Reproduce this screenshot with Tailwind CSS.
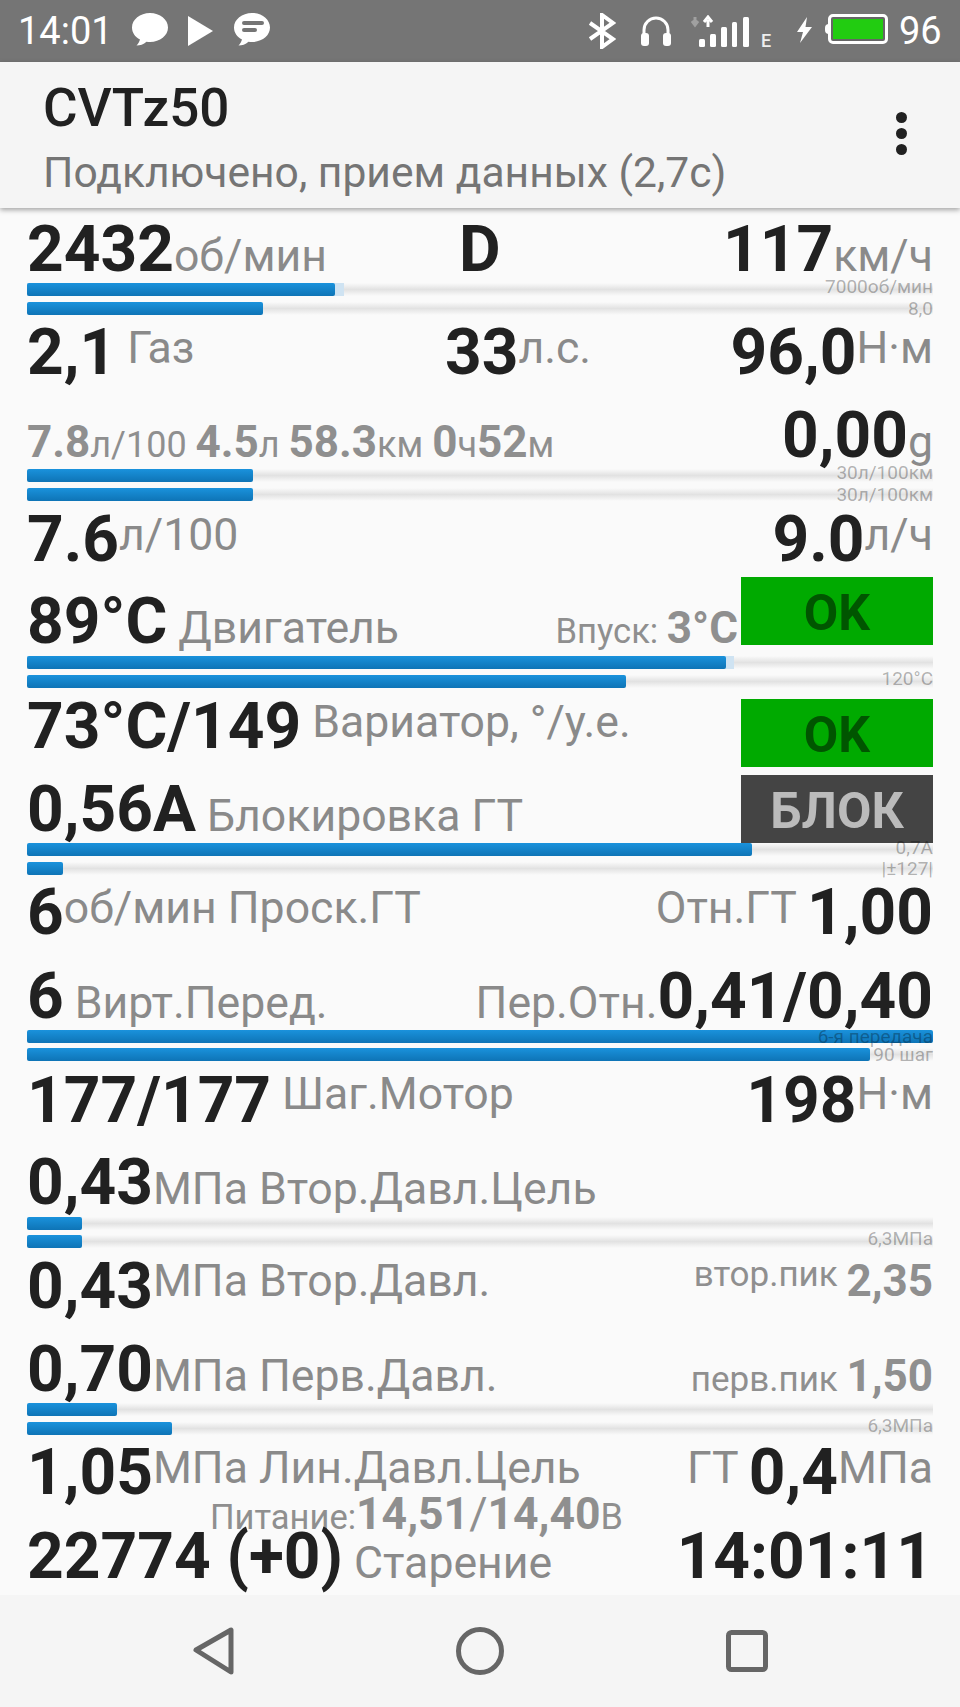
<!DOCTYPE html>
<html lang="ru"><head><meta charset="utf-8">
<script src="https://cdn.jsdelivr.net/npm/@tailwindcss/browser@4"></script>
</head>
<body class="m-0 font-[Roboto,sans-serif]">
<div class="w-[960px] h-[1707px] flex flex-col bg-[#fafafa] overflow-hidden">
  <!-- status bar -->
  <div class="h-[62px] bg-[#757575] flex items-center text-white text-[38px] leading-none relative shrink-0">
    <span class="ml-[18px] w-[114px]">14:01</span>
    <svg class="w-[36px] h-[33px] mt-[-3px]" viewBox="0 0 36 33" fill="#fff"><path d="M18 0C8 0 0 6.500 0 14.500c0 5 3 9.500 8 12-.5 2-2 4.500-3.500 6 3.500 0 7-1 10-3.800 1.100.2 2.300.3 3.500.3 10 0 18-6.500 18-14.500S28 0 18 0z"/></svg>
    <svg class="w-[25px] h-[30px] ml-[20px]" viewBox="0 0 25 30" fill="#fff"><path d="M0 0l25 15L0 30z"/></svg>
    <svg class="w-[36px] h-[33px] ml-[21px] mt-[-3px]" viewBox="0 0 36 33"><path fill="#fff" d="M18 0C8 0 0 6.500 0 14.500c0 5 3 9.500 8 12-.5 2-2 4.500-3.500 6 3.500 0 7-1 10-3.800 1.100.2 2.300.3 3.500.3 10 0 18-6.500 18-14.500S28 0 18 0z"/><path d="M10 10h18M10 17h11" stroke="#757575" stroke-width="4" stroke-linecap="round"/></svg>
    <svg class="w-[28px] h-[36px] ml-[318px]" viewBox="0 0 28 36" fill="none" stroke="#fff" stroke-width="4"><path d="M2 10l23 16-11 8V2l11 8L2 26"/></svg>
    <svg class="w-[32px] h-[30px] ml-[24px]" viewBox="0 0 32 30"><path d="M4 19v-5a12 12 0 0 1 24 0v5" fill="none" stroke="#fff" stroke-width="3"/><rect x="1" y="17" width="8" height="13" rx="3" fill="#fff"/><rect x="23" y="17" width="8" height="13" rx="3" fill="#fff"/></svg>
    <svg class="w-[60px] h-[32px] ml-[19px]" viewBox="0 0 60 32">
      <path d="M4 2v6M1 6l3 4 3-4" stroke="#a0a0a0" stroke-width="3" fill="none"/>
      <path d="M17 12V5M13 7l4-5 4 5" stroke="#fff" stroke-width="3" fill="none"/>
      <rect x="8" y="24" width="6" height="8" rx="1.500" fill="#fff"/><rect x="19" y="19" width="6" height="13" rx="1.500" fill="#fff"/><rect x="30" y="12" width="6" height="20" rx="1.500" fill="#fff"/><rect x="41" y="7" width="5" height="25" rx="1.500" fill="#fff"/><rect x="52" y="2" width="6" height="30" rx="1.500" fill="#fff"/>
    </svg>
    <span class="text-[18px] font-medium text-[#eee] ml-[10px] mt-[20px] w-[35px]">E</span>
    <svg class="w-[17px] h-[26px] ml-[0px] mt-[-3px]" viewBox="0 0 17 26" fill="#fff"><path d="M11 0L1 15h6L4 26l12-16H9.500z"/></svg>
    <div class="w-[63px] h-[30px] ml-[12px] flex items-center mt-[-4px]">
      <div class="w-[4px] h-[10px] bg-white rounded-l-sm"></div>
      <div class="w-[60px] h-[30px] border-[3px] border-white rounded-[5px] bg-[#666] p-[2px] ml-[-1px]"><div class="w-full h-full bg-[#22cc11]"></div></div>
    </div>
    <span class="ml-[11px]">96</span>
  </div>
  <!-- header -->
  <div class="h-[146px] bg-[#f5f5f5] shadow-[0_2px_5px_rgba(0,0,0,0.35)] relative z-10 shrink-0 flex justify-between pl-[43px] pr-[53px]">
    <div class="whitespace-nowrap">
      <div class="text-[53px] font-medium text-[#212121] leading-[58px] mt-[17px]">CVTz50</div>
      <div class="text-[42.600px] text-[#757575] leading-[44px] mt-[13px]">Подключено, прием данных (2,7с)</div>
    </div>
    <div class="flex flex-col gap-[5px] mt-[50px]">
      <div class="w-[11px] h-[11px] rounded-full bg-[#212121]"></div><div class="w-[11px] h-[11px] rounded-full bg-[#212121]"></div><div class="w-[11px] h-[11px] rounded-full bg-[#212121]"></div>
    </div>
  </div>
  <!-- data -->
  <div class="flex-1 px-[27px] pt-[11px] whitespace-nowrap text-[#212121] leading-[62px] overflow-hidden">
    <div class="flex items-baseline h-[64px]">
      <div class="w-[432px] text-[64px] font-bold">2432<span class="text-[44.600px] font-normal text-[#8a8a8a] leading-none">об/мин</span></div>
      <div class="text-[64px] font-bold">D</div>
      <div class="ml-auto text-[64px] font-bold">117<span class="text-[44.600px] font-normal text-[#8a8a8a] leading-none">км/ч</span></div>
    </div>
    <div class="relative h-[13px] mb-[6px] bg-linear-to-b from-transparent via-[#e2e2e2] to-transparent">
      <div class="absolute left-0 top-0 h-full w-[317px] bg-[#cfe3f2]"></div>
      <div class="absolute left-0 top-0 h-full w-[308px] rounded-[2px] bg-linear-to-b from-[#1a92dc] to-[#0e74b6]"></div>
      <span class="absolute right-0 top-[-6px] text-[19px] leading-[20px] text-black/30">7000об/мин</span>
    </div>
    <div class="relative h-[13px] bg-linear-to-b from-transparent via-[#e2e2e2] to-transparent">
      <div class="h-full w-[236px] rounded-[2px] bg-linear-to-b from-[#1a92dc] to-[#0e74b6]"></div>
      <span class="absolute right-0 top-[-3px] text-[19px] leading-[20px] text-black/30">8,0</span>
    </div>

    <div class="flex items-baseline h-[83px] mt-[7px]">
      <div class="w-[418px] text-[64px] font-bold">2,1<span class="text-[44.600px] font-normal text-[#8a8a8a] leading-none align-[11px]"> Газ</span></div>
      <div class="text-[64px] font-bold">33<span class="text-[44.600px] font-normal text-[#8a8a8a] leading-none align-[11px]">л.с.</span></div>
      <div class="ml-auto text-[64px] font-bold">96,0<span class="text-[44.600px] font-normal text-[#8a8a8a] leading-none align-[11px]">Н·м</span></div>
    </div>
    <div class="flex items-baseline justify-between h-[64px]">
      <div class="text-[44px] font-bold text-[#8f8f8f] leading-none">7.8<span class="text-[36px] font-normal">л/100 </span>4.5<span class="text-[36px] font-normal">л </span>58.3<span class="text-[36px] font-normal">км </span>0<span class="text-[36px] font-normal">ч</span>52<span class="text-[36px] font-normal">м</span></div>
      <div class="text-[64px] font-bold">0,00<span class="text-[44.600px] font-normal text-[#8a8a8a] leading-none">g</span></div>
    </div>
    <div class="relative h-[13px] mb-[6px] bg-linear-to-b from-transparent via-[#e2e2e2] to-transparent">
      <div class="h-full w-[226px] rounded-[2px] bg-linear-to-b from-[#1a92dc] to-[#0e74b6]"></div>
      <span class="absolute right-0 top-[-6px] text-[19px] leading-[20px] text-black/30">30л/100км</span>
    </div>
    <div class="relative h-[13px] bg-linear-to-b from-transparent via-[#e2e2e2] to-transparent">
      <div class="h-full w-[226px] rounded-[2px] bg-linear-to-b from-[#1a92dc] to-[#0e74b6]"></div>
      <span class="absolute right-0 top-[-3px] text-[19px] leading-[20px] text-black/30">30л/100км</span>
    </div>

    <div class="flex items-baseline justify-between h-[82px] mt-[8px]">
      <div class="text-[64px] font-bold">7.6<span class="text-[44.600px] font-normal text-[#8a8a8a] leading-none align-[11px]">л/100</span></div>
      <div class="text-[64px] font-bold">9.0<span class="text-[44.600px] font-normal text-[#8a8a8a] leading-none align-[11px]">л/ч</span></div>
    </div>
    <div class="flex items-baseline h-[65px]">
      <div class="text-[64px] font-bold">89°C<span class="text-[44.600px] font-normal text-[#8a8a8a] leading-none"> Двигатель</span></div>
      <div class="ml-auto mr-[3px] text-[44px] font-bold text-[#8f8f8f] leading-none"><span class="text-[34.600px] font-normal">Впуск: </span>3°C</div>
      <div class="self-start mt-[-14px] w-[192px] h-[68px] bg-[#00aa00] text-[#005500] text-[50px] font-bold leading-[72px] text-center">OK</div>
    </div>
    <div class="relative h-[13px] mb-[6px] bg-linear-to-b from-transparent via-[#e2e2e2] to-transparent">
      <div class="absolute left-0 top-0 h-full w-[707px] bg-[#cfe3f2]"></div>
      <div class="absolute left-0 top-0 h-full w-[699px] rounded-[2px] bg-linear-to-b from-[#1a92dc] to-[#0e74b6]"></div>
    </div>
    <div class="relative h-[13px] bg-linear-to-b from-transparent via-[#e2e2e2] to-transparent">
      <div class="h-full w-[599px] rounded-[2px] bg-linear-to-b from-[#1a92dc] to-[#0e74b6]"></div>
      <span class="absolute right-0 top-[-6px] text-[19px] leading-[20px] text-black/30">120°C</span>
    </div>

    <div class="flex items-baseline h-[83px] mt-[8px]">
      <div class="text-[64px] font-bold">73°C/149<span class="text-[44.600px] font-normal text-[#8a8a8a] leading-none align-[11px]"> Вариатор, °/у.е.</span></div>
      <div class="ml-auto self-start mt-[3px] w-[192px] h-[68px] bg-[#00aa00] text-[#005500] text-[50px] font-bold leading-[72px] text-center">OK</div>
    </div>
    <div class="flex items-baseline h-[64px]">
      <div class="text-[64px] font-bold">0,56A<span class="text-[44.600px] font-normal text-[#8a8a8a] leading-none"> Блокировка ГТ</span></div>
      <div class="ml-auto self-start mt-[-4px] w-[192px] h-[68px] bg-[#444444] text-[#bbbbbb] text-[50px] font-bold leading-[72px] text-center">БЛОК</div>
    </div>
    <div class="relative h-[13px] mb-[6px] bg-linear-to-b from-transparent via-[#e2e2e2] to-transparent">
      <div class="h-full w-[725px] rounded-[2px] bg-linear-to-b from-[#1a92dc] to-[#0e74b6]"></div>
      <span class="absolute right-0 top-[-5px] text-[19px] leading-[20px] text-black/30">0,7A</span>
    </div>
    <div class="relative h-[13px] bg-linear-to-b from-transparent via-[#e2e2e2] to-transparent">
      <div class="h-full w-[36px] rounded-[2px] bg-linear-to-b from-[#1a92dc] to-[#0e74b6]"></div>
      <span class="absolute right-0 top-[-3px] text-[19px] leading-[20px] text-black/30">|±127|</span>
    </div>

    <div class="flex items-baseline justify-between h-[84px] mt-[7px]">
      <div class="text-[64px] font-bold">6<span class="text-[44.600px] font-normal text-[#8a8a8a] leading-none align-[11px]">об/мин Проск.ГТ</span></div>
      <div class="text-[64px] font-bold"><span class="text-[44.600px] font-normal text-[#8a8a8a] leading-none align-[11px]">Отн.ГТ </span>1,00</div>
    </div>
    <div class="flex items-baseline justify-between h-[64px]">
      <div class="text-[64px] font-bold">6<span class="text-[44.600px] font-normal text-[#8a8a8a] leading-none"> Вирт.Перед.</span></div>
      <div class="text-[64px] font-bold"><span class="text-[44.600px] font-normal text-[#8a8a8a] leading-none">Пер.Отн.</span>0,41/0,40</div>
    </div>
    <div class="relative h-[13px] mb-[5px] bg-linear-to-b from-transparent via-[#e2e2e2] to-transparent">
      <div class="h-full w-full rounded-[2px] bg-linear-to-b from-[#1a92dc] to-[#0e74b6]"></div>
      <span class="absolute right-0 top-[-3px] text-[19px] leading-[20px] text-black/30">6-я передача</span>
    </div>
    <div class="relative h-[13px] bg-linear-to-b from-transparent via-[#e2e2e2] to-transparent">
      <div class="h-full w-[843px] rounded-[2px] bg-linear-to-b from-[#1a92dc] to-[#0e74b6]"></div>
      <span class="absolute right-0 top-[-3px] text-[19px] leading-[20px] text-black/30">90 шаг</span>
    </div>

    <div class="flex items-baseline justify-between h-[82px] mt-[9px]">
      <div class="text-[64px] font-bold">177/177<span class="text-[44.600px] font-normal text-[#8a8a8a] leading-none align-[13px]"> Шаг.Мотор</span></div>
      <div class="text-[64px] font-bold">198<span class="text-[44.600px] font-normal text-[#8a8a8a] leading-none align-[13px]">Н·м</span></div>
    </div>
    <div class="flex items-baseline h-[65px]">
      <div class="text-[64px] font-bold">0,43<span class="text-[44.600px] font-normal text-[#8a8a8a] leading-none">МПа Втор.Давл.Цель</span></div>
    </div>
    <div class="relative h-[13px] mb-[5px] bg-linear-to-b from-transparent via-[#e2e2e2] to-transparent">
      <div class="h-full w-[55px] rounded-[2px] bg-linear-to-b from-[#1a92dc] to-[#0e74b6]"></div>
    </div>
    <div class="relative h-[13px] bg-linear-to-b from-transparent via-[#e2e2e2] to-transparent">
      <div class="h-full w-[55px] rounded-[2px] bg-linear-to-b from-[#1a92dc] to-[#0e74b6]"></div>
      <span class="absolute right-0 top-[-6px] text-[19px] leading-[20px] text-black/30">6,3МПа</span>
    </div>

    <div class="flex items-baseline justify-between h-[83px] mt-[8px]">
      <div class="text-[64px] font-bold">0,43<span class="text-[44.600px] font-normal text-[#8a8a8a] leading-none align-[12px]">МПа Втор.Давл.</span></div>
      <div class="text-[44px] font-bold text-[#8f8f8f] leading-none"><span class="text-[35px] font-normal align-[22px]">втор.пик </span><span class="align-[12px]">2,35</span></div>
    </div>
    <div class="flex items-baseline justify-between h-[64px]">
      <div class="text-[64px] font-bold">0,70<span class="text-[44.600px] font-normal text-[#8a8a8a] leading-none">МПа Перв.Давл.</span></div>
      <div class="text-[44px] font-bold text-[#8f8f8f] leading-none"><span class="text-[35px] font-normal">перв.пик </span>1,50</div>
    </div>
    <div class="relative h-[13px] mb-[6px] bg-linear-to-b from-transparent via-[#e2e2e2] to-transparent">
      <div class="h-full w-[90px] rounded-[2px] bg-linear-to-b from-[#1a92dc] to-[#0e74b6]"></div>
    </div>
    <div class="relative h-[13px] bg-linear-to-b from-transparent via-[#e2e2e2] to-transparent">
      <div class="h-full w-[145px] rounded-[2px] bg-linear-to-b from-[#1a92dc] to-[#0e74b6]"></div>
      <span class="absolute right-0 top-[-6px] text-[19px] leading-[20px] text-black/30">6,3МПа</span>
    </div>

    <div class="flex items-baseline justify-between h-[57px] mt-[7px]">
      <div class="text-[64px] font-bold">1,05<span class="text-[44.600px] font-normal text-[#8a8a8a] leading-none align-[11px]">МПа Лин.Давл.Цель</span></div>
      <div class="text-[64px] font-bold"><span class="text-[44.600px] font-normal text-[#8a8a8a] leading-none align-[11px]">ГТ </span>0,4<span class="text-[44.600px] font-normal text-[#8a8a8a] leading-none align-[11px]">МПа</span></div>
    </div>
    <div class="h-[27px] pl-[183px] leading-[30px] text-[44.500px] font-bold text-[#8f8f8f]"><span class="text-[34.500px] font-normal">Питание:</span>14,51<span class="font-normal">/</span>14,40<span class="text-[36px] font-normal">В</span></div>
    <div class="flex items-baseline justify-between h-[69px]">
      <div class="text-[64px] font-bold">22774 (+0)<span class="text-[44.600px] font-normal text-[#8a8a8a] leading-none"> Старение</span></div>
      <div class="text-[64px] font-bold">14:01:11</div>
    </div>
  </div>
  <!-- nav -->
  <div class="h-[112px] bg-[#f5f5f5] shrink-0 flex items-center justify-center relative">
    <svg class="w-[42px] h-[48px] absolute left-[193px] top-[32px]" viewBox="0 0 42 48" fill="none" stroke="#666" stroke-width="5" stroke-linejoin="round"><path d="M38 3v42L3 23z"/></svg>
    <svg class="w-[48px] h-[48px] absolute left-[456px] top-[32px]" viewBox="0 0 48 48" fill="none" stroke="#666" stroke-width="5"><circle cx="24" cy="24" r="21.500"/></svg>
    <svg class="w-[42px] h-[42px] absolute left-[726px] top-[35px]" viewBox="0 0 42 42" fill="none" stroke="#666" stroke-width="5"><rect x="2.500" y="2.500" width="37" height="37" rx="3"/></svg>
  </div>
</div>
</body></html>
